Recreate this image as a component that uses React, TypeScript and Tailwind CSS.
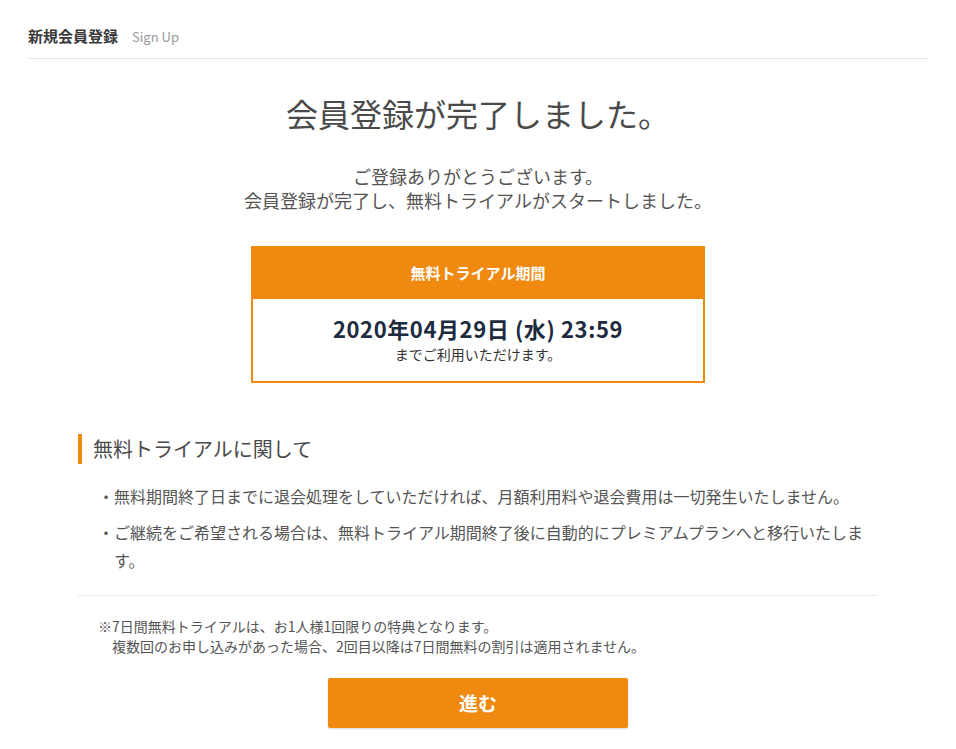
import React from "react";

export default function App() {
  return (
    <div className="min-h-screen bg-white font-['Noto_Sans_CJK_JP','Noto_Sans',sans-serif] text-[#4a4a4a]">
      <div className="px-[28px]">
        <header className="flex items-baseline gap-[14px] border-b border-[#e6e6e6] pt-[26px] pb-[11px]">
          <span className="text-[15px] leading-[20px] font-bold text-[#3a3a3a]">新規会員登録</span>
          <span className="text-[13px] leading-[20px] text-[#9a9a9a]">Sign Up</span>
        </header>

        <main className="flex flex-col items-center">
          <h1 className="mt-[32px] text-[32px] leading-[44px] font-normal text-[#4a4a4a]">
            会員登録が完了しました。
          </h1>
          <div className="mt-[29px] text-center text-[18px] leading-[24px] text-[#555]">
            <p>ご登録ありがとうございます。</p>
            <p>会員登録が完了し、無料トライアルがスタートしました。</p>
          </div>

          <div className="mt-[34px] w-[454px] border-2 border-[#f0890f]">
            <div className="flex h-[51px] items-center justify-center bg-[#f0890f] text-[15px] font-bold text-white">
              無料トライアル期間
            </div>
            <div className="flex flex-col items-center pt-[15px] pb-[17px]">
              <div className="text-[22px] leading-[28px] font-bold tracking-[0.6px] text-[#1c2b3d]">
                2020年04月29日 (水) 23:59
              </div>
              <div className="mt-[2px] text-[14px] leading-[20px] text-[#333]">
                までご利用いただけます。
              </div>
            </div>
          </div>

          <section className="mt-[51px] w-[800px]">
            <h2 className="border-l-4 border-[#f0890f] pl-[11px] text-[20px] leading-[30px] font-normal text-[#4a4a4a]">
              無料トライアルに関して
            </h2>
            <ul className="mt-[18px] flex flex-col gap-[8px] pl-[20px] text-[16px] leading-[28px] text-[#555]">
              <li className="flex">
                <span className="w-[16px] shrink-0">・</span>
                <span>無料期間終了日までに退会処理をしていただければ、月額利用料や退会費用は一切発生いたしません。</span>
              </li>
              <li className="flex">
                <span className="w-[16px] shrink-0">・</span>
                <span>ご継続をご希望される場合は、無料トライアル期間終了後に自動的にプレミアムプランへと移行いたします。</span>
              </li>
            </ul>
            <div className="mt-[21px] border-t border-[#ececec]" />
            <div className="mt-[20px] pl-[20px] text-[14px] leading-[20px] text-[#555]">
              <p>※7日間無料トライアルは、お1人様1回限りの特典となります。</p>
              <p className="pl-[14px]">複数回のお申し込みがあった場合、2回目以降は7日間無料の割引は適用されません。</p>
            </div>
            <div className="mt-[22px] flex justify-center pb-[20px]">
              <button className="flex h-[50px] w-[300px] items-center justify-center rounded-[2px] bg-[#f0890f] text-[19px] font-bold text-white shadow-[0_1px_2px_rgba(0,0,0,0.15)]">
                進む
              </button>
            </div>
          </section>
        </main>
      </div>
    </div>
  );
}
